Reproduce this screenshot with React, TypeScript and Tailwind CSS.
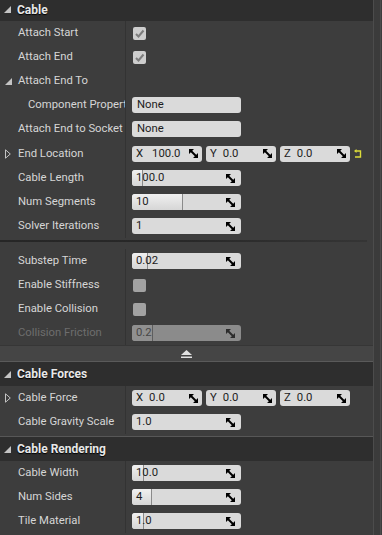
import type * as React from "react";

// UE-style details panel: Cable component properties

function SpinArrows({ dim }: { dim?: boolean }): React.JSX.Element {
  const c = dim ? "#2c2c2c" : "#000";
  return (
    <svg width="9" height="9" viewBox="0 0 9 9" className="shrink-0">
      <path d="M0 0H5L0 5Z M9 9H4L9 4Z" fill={c} />
      <path d="M1.5 1.5L7.5 7.5" stroke={c} strokeWidth="2" />
    </svg>
  );
}

function TriOpen(): React.JSX.Element {
  return (
    <svg width="7" height="7" viewBox="0 0 7 7">
      <path d="M7 0V7H0Z" fill="#c4c4c4" />
    </svg>
  );
}

function TriClosed(): React.JSX.Element {
  return (
    <svg width="6" height="10" viewBox="0 0 6 10">
      <path d="M0.5 0.8L5.3 5L0.5 9.2Z" fill="none" stroke="#c4c4c4" strokeWidth="1" />
    </svg>
  );
}

function ResetArrow(): React.JSX.Element {
  return (
    <svg width="8" height="10" viewBox="0 0 8 10">
      <path d="M2 2H6.5V8H1" fill="none" stroke="#dcdc3a" strokeWidth="1.4" />
      <path d="M0 2L2.5 0V4Z" fill="#dcdc3a" />
    </svg>
  );
}

function NumBox({
  value,
  fill,
  disabled,
}: {
  value: string;
  fill?: number;
  disabled?: boolean;
}): React.JSX.Element {
  return (
    <div
      className={`relative flex h-[16px] w-[109px] items-center overflow-hidden rounded-[3px] ${
        disabled ? "bg-[#8b8b8b] text-[#474747]" : "bg-[#dadada] text-[#1c1c1c]"
      }`}
    >
      {fill !== undefined && (
        <div
          className={`absolute inset-y-0 left-0 border-r ${
            disabled
              ? "border-[#5e5e5e] bg-[#909090]"
              : "border-[#8a8a8a] bg-linear-to-b from-[#f0f0f0] to-[#d6d6d6]"
          }`}
          style={{ width: fill }}
        />
      )}
      <span className="relative flex-1 pl-[4px]">{value}</span>
      <span className="relative pr-[6px]">
        <SpinArrows dim={disabled} />
      </span>
    </div>
  );
}

function TextBox({ value }: { value: string }): React.JSX.Element {
  return (
    <div className="flex h-[16px] w-[109px] items-center rounded-[3px] bg-[#dadada] pl-[5px] text-[#1c1c1c]">
      {value}
    </div>
  );
}

function VecBox({ axis, value, wide }: { axis: string; value: string; wide?: boolean }): React.JSX.Element {
  return (
    <div className="flex h-[16px] w-[70px] items-center rounded-[3px] bg-[#dadada] pl-[4px] pr-[4px] text-[#1c1c1c]">
      <span>{axis}</span>
      <span className={`flex-1 ${wide ? "pl-[9px]" : "pl-[6px]"}`}>{value}</span>
      <SpinArrows />
    </div>
  );
}

function Check({ on }: { on?: boolean }): React.JSX.Element {
  return (
    <div
      className={`ml-[1px] flex h-[13px] w-[13px] items-center justify-center rounded-[2px] ${
        on ? "bg-[#cdcdcd]" : "bg-[#a2a2a2]"
      }`}
    >
      {on && (
        <svg width="11" height="11" viewBox="0 0 11 11">
          <path d="M2 6L4.5 8.5L9.5 2.5" fill="none" stroke="#7c7c7c" strokeWidth="2" />
        </svg>
      )}
    </div>
  );
}

function Row({
  label,
  indent,
  arrow,
  dim,
  tall,
  children,
}: {
  label: string;
  indent?: boolean;
  arrow?: "open" | "closed";
  dim?: boolean;
  tall?: boolean;
  children?: React.ReactNode;
}): React.JSX.Element {
  return (
    <div className={`flex ${tall ? "h-[25px]" : "h-[24px]"}`}>
      <div className="flex w-[126px] shrink-0 items-center overflow-hidden whitespace-nowrap border-r border-[#333333] pl-[5px]">
        <span className="flex w-[13px] shrink-0 items-center">
          {arrow === "open" && <TriOpen />}
          {arrow === "closed" && <TriClosed />}
        </span>
        {indent && <span className="w-[10px] shrink-0" />}
        <span className={dim ? "text-[#6d6d6d]" : "text-[#d6d6d6]"}>{label}</span>
      </div>
      <div className="flex flex-1 items-center gap-[4px] pl-[6px]">{children}</div>
    </div>
  );
}

function Header({ title, short }: { title: string; short?: boolean }): React.JSX.Element {
  return (
    <div
      className={`flex items-center bg-[#2e2e2e] pl-[4px] ${
        short ? "h-[21px] pb-[2px]" : "h-[24px]"
      }`}
    >
      <TriOpen />
      <span className="ml-[6px] text-[12px] font-bold text-[#e8e8e8] [text-shadow:0_1px_1px_#000]">
        {title}
      </span>
    </div>
  );
}

export default function App(): React.JSX.Element {
  return (
    <div className="flex h-[535px] w-[382px] overflow-hidden bg-[#3d3d3d] font-['Roboto',sans-serif] text-[11.3px] leading-none">
      <div className="flex w-[373px] shrink-0 flex-col">
        <Header title="Cable" short />
        <Row label="Attach Start">
          <Check on />
        </Row>
        <Row label="Attach End">
          <Check on />
        </Row>
        <Row label="Attach End To" arrow="open" />
        <Row label="Component Property" indent>
          <TextBox value="None" />
        </Row>
        <Row label="Attach End to Socket">
          <TextBox value="None" />
        </Row>
        <Row label="End Location" arrow="closed" tall>
          <VecBox axis="X" value="100.0" wide />
          <VecBox axis="Y" value="0.0" />
          <VecBox axis="Z" value="0.0" />
          <ResetArrow />
        </Row>
        <Row label="Cable Length">
          <NumBox value="100.0" fill={11} />
        </Row>
        <Row label="Num Segments">
          <NumBox value="10" fill={51} />
        </Row>
        <Row label="Solver Iterations">
          <NumBox value="1" />
        </Row>
        <div className="h-[11px] pt-[2px]">
          <div className="mr-[6px] h-[2px] bg-linear-to-r from-[#262626] via-[#282828] to-[#353535]" />
        </div>
        <Row label="Substep Time">
          <NumBox value="0.02" fill={16} />
        </Row>
        <Row label="Enable Stiffness">
          <Check />
        </Row>
        <Row label="Enable Collision">
          <Check />
        </Row>
        <Row label="Collision Friction" dim>
          <NumBox value="0.2" fill={21} disabled />
        </Row>
        <div className="flex h-[17px] items-center justify-center border-t border-b border-t-[#363636] border-b-[#5a5a5a] bg-[#454545]">
          <svg width="11" height="8" viewBox="0 0 11 8">
            <path d="M5.5 0L11 5H0Z" fill="#e2e2e2" />
            <rect x="0" y="6.5" width="11" height="1.5" fill="#e2e2e2" />
          </svg>
        </div>
        <Header title="Cable Forces" />
        <Row label="Cable Force" arrow="closed">
          <VecBox axis="X" value="0.0" />
          <VecBox axis="Y" value="0.0" />
          <VecBox axis="Z" value="0.0" />
        </Row>
        <Row label="Cable Gravity Scale">
          <NumBox value="1.0" />
        </Row>
        <div className="h-[3px] border-b border-[#575757]" />
        <Header title="Cable Rendering" />
        <Row label="Cable Width">
          <NumBox value="10.0" fill={12} />
        </Row>
        <Row label="Num Sides">
          <NumBox value="4" fill={20} />
        </Row>
        <Row label="Tile Material">
          <NumBox value="1.0" fill={12} />
        </Row>
      </div>
      <div className="flex w-[9px] shrink-0">
        <div className="w-px bg-[#4c4c4c]" />
        <div className="w-[6px] bg-[#3b3b3b]" />
        <div className="w-px bg-[#4c4c4c]" />
        <div className="w-px bg-[#3d3d3d]" />
      </div>
    </div>
  );
}
